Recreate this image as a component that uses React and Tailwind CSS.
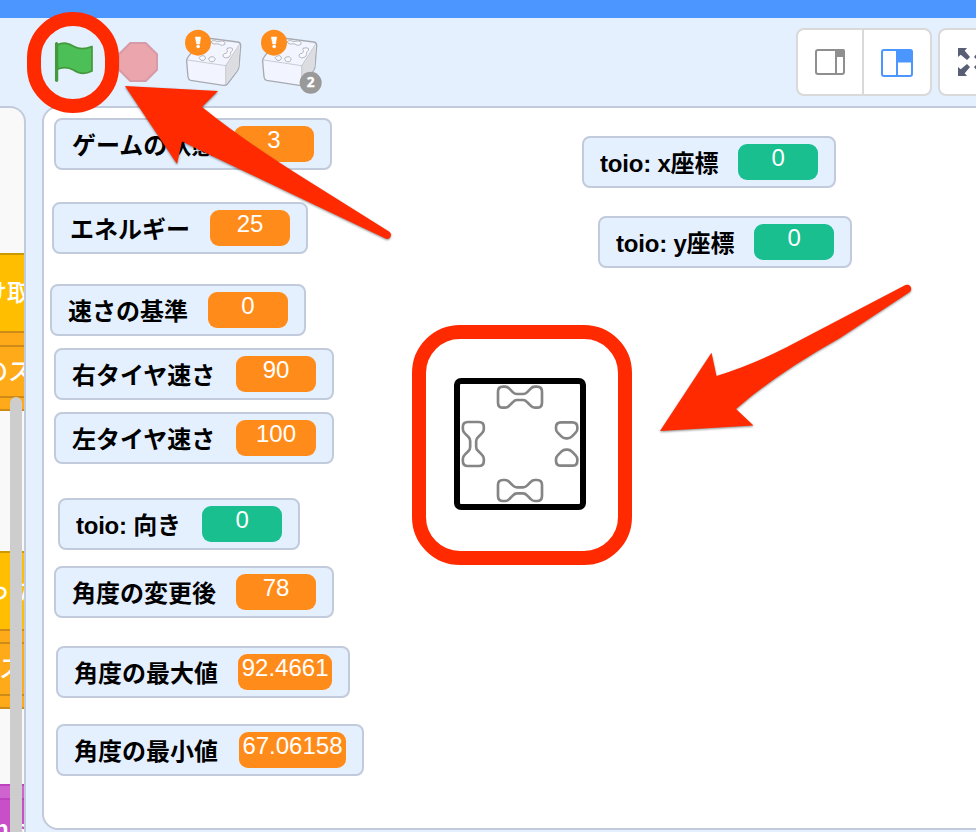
import React from 'react';

const monitors = [
    { label: 'ゲームの状態', value: '3', box: 'left-[10px] top-[10px] w-[278px]', color: 'bg-[#ff8c1a]' },
    { label: 'エネルギー', value: '25', box: 'left-[8px] top-[94px] w-[256px]', color: 'bg-[#ff8c1a]' },
    { label: '速さの基準', value: '0', box: 'left-[6px] top-[176px] w-[256px]', color: 'bg-[#ff8c1a]' },
    { label: '右タイヤ速さ', value: '90', box: 'left-[10px] top-[240px] w-[280px]', color: 'bg-[#ff8c1a]' },
    { label: '左タイヤ速さ', value: '100', box: 'left-[10px] top-[304px] w-[280px]', color: 'bg-[#ff8c1a]' },
    { label: 'toio: 向き', value: '0', box: 'left-[14px] top-[390px] w-[242px] tracking-[-0.25px]', color: 'bg-[#19bf8f]' },
    { label: '角度の変更後', value: '78', box: 'left-[10px] top-[458px] w-[280px]', color: 'bg-[#ff8c1a]' },
    { label: '角度の最大値', value: '92.4661', box: 'left-[12px] top-[538px] w-[294px]', color: 'bg-[#ff8c1a]' },
    { label: '角度の最小値', value: '67.06158', box: 'left-[12px] top-[616px] w-[308px]', color: 'bg-[#ff8c1a]' },
    { label: 'toio: x座標', value: '0', box: 'left-[538px] top-[28px] w-[254px] tracking-[-0.2px]', color: 'bg-[#19bf8f]' },
    { label: 'toio: y座標', value: '0', box: 'left-[554px] top-[108px] w-[254px] tracking-[-0.2px]', color: 'bg-[#19bf8f]' },
];

const Monitor = ({ label, value, box, color }) => (
    <div className={`absolute flex h-[52px] items-center justify-between rounded-lg border-2 border-[#c2cbdb] bg-[#e5f0ff] px-4 ${box}`}>
        <span className="pt-[3px] text-[24px] leading-8 font-bold whitespace-nowrap text-black">{label}</span>
        <span className={`h-9 min-w-20 rounded-[9px] px-[3.5px] text-center text-[24px] leading-[28px] text-white ${color}`}>{value}</span>
    </div>
);

const Flag = () => (
    <svg className="h-10 w-10 shrink-0" viewBox="0 0 40 40">
        <path d="M2.500 3.200C10-.5 15 1.500 20 4.500C26 8 31 7.500 38 4.500V29C31 32.500 25 32 19.500 28C14 25 9 24.500 2.500 27.500Z" fill="#4cbf56" stroke="#45993d" strokeWidth="1.700" strokeLinejoin="round" />
        <path d="M2.600 1.700V38.300" stroke="#45993d" strokeWidth="3.300" strokeLinecap="round" />
    </svg>
);

const Stop = () => (
    <svg className="h-10 w-10 shrink-0" viewBox="0 0 40 40">
        <path d="M12.300 1H27.700L39 12.300V27.700L27.700 39H12.300L1 27.700V12.300Z" fill="#eba5ad" stroke="#d69ba7" strokeWidth="2" strokeLinejoin="round" />
    </svg>
);

const Cube = ({ count }) => (
    <svg className="h-[72px] w-16 shrink-0" viewBox="36 78 192 216">
        <g strokeLinejoin="round" strokeLinecap="round">
            <path d="M50 184Q50 176 55 170L96 118Q101 113 110 114L203 126Q213 128 212 138L207 200Q206 208 201 214L172 252Q168 257 160 256L62 241Q55 239 54 231Z" fill="#f2f5ff" stroke="#a7abb1" strokeWidth="4" />
            <path d="M167 197L209 134L205 203L168 253Z" fill="#dcdde0" />
            <path d="M53 180L167 197L209 132M167 197V253" fill="none" stroke="#b3b7bd" strokeWidth="2" />
            <g fill="#f7f9ff" stroke="#b3b7bd" strokeWidth="3">
                <path d="M124 125Q126 120 134 122Q143 127 149 124Q158 120 165 127Q168 134 158 136Q151 136 147 132Q139 131 133 132Q123 131 124 125Z" />
                <path d="M172 145Q181 141 187 145Q190 151 183 155Q180 160 182 164Q179 174 167 174Q157 171 159 165Q161 160 168 160Q174 157 172 152Q168 148 172 145Z" />
                <path d="M93 168L102 167L107 174L102 181H93L88 174Z" />
                <path d="M121 171L130 170L136 177L131 185H121L116 178Z" />
            </g>
        </g>
        <circle cx="84" cy="128" r="39" fill="#ff8c1a" />
        <path d="M76 111H92L89 132H80Z" fill="#fff" stroke="#fff" strokeWidth="1.500" strokeLinejoin="round" />
        <circle cx="84.500" cy="139.500" r="5.500" fill="#fff" />
        {count && (
            <>
                <circle cx="194" cy="248" r="33" fill="#999" />
                <text x="194" y="262" textAnchor="middle" className="fill-white stroke-white stroke-1 font-['Noto_Sans'] text-[41px] font-bold">{count}</text>
            </>
        )}
    </svg>
);

const SmallStageIcon = () => (
    <svg className="h-7 w-8" viewBox="0 0 32 28">
        <rect x="2" y="2" width="28" height="24" rx="2" fill="none" stroke="#8f8f8f" strokeWidth="2" />
        <path d="M22 2H29Q30 2 30 3V8H22Z" fill="#8f8f8f" stroke="#8f8f8f" strokeWidth="2" />
        <path d="M22 8V26" stroke="#8f8f8f" strokeWidth="2" />
    </svg>
);

const LargeStageIcon = () => (
    <svg className="h-7 w-8" viewBox="0 0 32 28">
        <rect x="1" y="1" width="30" height="26" rx="2" fill="none" stroke="#4c97ff" strokeWidth="2" />
        <path d="M16 1H30Q31 1 31 2V13H16Z" fill="#4c97ff" stroke="#4c97ff" />
        <path d="M16 2V26" stroke="#4c97ff" strokeWidth="2" />
    </svg>
);

const FullScreenIcon = () => (
    <svg className="h-7 w-7 shrink-0" viewBox="0 0 28 28" fill="#575e75">
        <path d="M0 0H9L6.700 2.700L12 9L9 12L2.700 6.700L0 9Z" />
        <path d="M28 0H19L21.300 2.700L16 9L19 12L25.300 6.700L28 9Z" />
        <path d="M0 28H9L6.700 25.300L12 19L9 16L2.700 21.300L0 19Z" />
        <path d="M28 28H19L21.300 25.300L16 19L19 16L25.300 21.300L28 19Z" />
    </svg>
);

// Visible edge of the block workspace
const Workspace = () => (
    <div className="relative h-[740px] w-[26px] shrink-0 overflow-hidden rounded-tr-[16px] border-t-2 border-r-2 border-[#c2cbdb] bg-[#f9f9f9] text-[24px] font-medium whitespace-nowrap text-white">
        <div className="mt-[145px] flex h-[78px] items-center border-t-2 border-[#cc9900] bg-[#ffbf00]">
            <span className="-ml-[17px]">け取る</span>
        </div>
        <div className="h-[14px] border-t-2 border-[#cf8b17] bg-[#ffab19]" />
        <div className="flex h-[51px] items-center border-t-2 border-[#cf8b17] bg-[#ffab19]">
            <span className="-ml-[16px]">のス</span>
        </div>
        <div className="h-[15px] border-y-2 border-[#cf8b17] bg-[#ffab19]" />
        <div className="mt-[140px] flex h-[78px] items-center border-t-2 border-[#cc9900] bg-[#ffbf00]">
            <span className="-ml-[14px] tracking-[8px]">った</span>
        </div>
        <div className="h-[13px] border-t-2 border-[#cf8b17] bg-[#ffab19]" />
        <div className="flex h-[52px] items-center border-t-2 border-[#cf8b17] bg-[#ffab19]">
            <span className="-ml-[1px]">ス</span>
        </div>
        <div className="h-[15px] border-y-2 border-[#cf8b17] bg-[#ffab19]" />
        <div className="mt-[75px] h-[14px] border-t-2 border-[#bd42bd] bg-[#cf63cf]" />
        <div className="flex h-[60px] items-center border-t-2 border-[#bd42bd] bg-[#c94fc9]">
            <span className="-ml-[6px] font-bold">n s</span>
        </div>
        <div className="absolute top-[289px] left-[10px] h-[460px] w-3 rounded-full bg-[#cecdce]" />
    </div>
);

// Dumbbell shaped stud on top of the cube
const STUD = 'M311 230H315Q323 230 328 236L339 247Q344 252 351 252H369Q376 252 381 247L392 236Q397 230 405 230H411Q426 230 426 245V278Q426 293 411 293H405Q397 293 392 287L381 276Q376 270 369 270H351Q344 270 339 276L328 287Q323 293 315 293H309Q294 293 294 278V245Q294 230 309 230Z';

const ToioSprite = () => (
    <svg className="absolute top-[202px] left-[356px] h-[270px] w-60" viewBox="0 0 720 810">
        <rect x="171" y="213" width="378" height="378" rx="12" fill="#fff" stroke="#000" strokeWidth="18" />
        <g fill="none" stroke="#858585" strokeWidth="8" strokeLinejoin="round">
            <path d={STUD} />
            <path d={STUD} transform="translate(0 280)" />
            <path d={STUD} transform="translate(-41.500 762) rotate(-90)" />
            <path d="M483 337H517Q532 337 532 352V356Q532 363 527 368L516 379Q510 385 502 385H498Q490 385 484 379L473 368Q468 363 468 356V352Q468 337 483 337Z" />
            <path d="M483 467H517Q532 467 532 452V448Q532 441 527 436L516 425Q510 419 502 419H498Q490 419 484 425L473 436Q468 441 468 448V452Q468 467 483 467Z" />
        </g>
    </svg>
);

// Red marker shapes that lie over the editor
const Annotations = () => (
    <>
        <div className="absolute top-[12px] left-[27px] h-[101px] w-[92px] rounded-[46px] border-[14px] border-[#ff2a00]" />
        <div className="absolute top-[325px] left-[412px] h-[240px] w-[220px] rounded-[48px] border-[14px] border-[#ff2a00]" />
        <svg className="absolute top-0 left-0 h-[832px] w-[976px] drop-shadow-[0_1px_1px_rgba(0,0,0,0.45)]" viewBox="0 0 976 832" fill="#ff2a00">
            <path d="M125 86L218 91L202 107Q248 144 310 182L389 231.500A4 4 0 0 1 386 238.800L317 206Q235 167 182 141.500L177 164Z" />
            <path d="M660 431L711.500 352.700L716.500 376Q752 365 787 347L905 285.200A4 4 0 0 1 909 292.500L840 338Q776 374 736 409L753.500 425.500Z" />
        </svg>
    </>
);

const App = () => {
    return (
        <div className="relative h-[832px] w-[976px] overflow-hidden bg-[#e5f0ff] font-['Liberation_Sans','Noto_Sans_CJK_JP',sans-serif]">
            <div className="h-[18px] bg-[#4c97ff]" />

            {/* Stage header */}
            <div className="flex h-[88px] items-center pl-[54px]">
                <Flag />
                <div className="ml-6 flex"><Stop /></div>
                <div className="ml-6 flex gap-3">
                    <Cube />
                    <Cube count="2" />
                </div>
                <div className="ml-auto flex shrink-0 gap-[6px]">
                    <div className="flex h-[68px] w-[136px] rounded-lg border-2 border-[#d9d9d9] bg-white">
                        <div className="flex w-[66px] items-center justify-center border-r-2 border-[#d9d9d9]">
                            <SmallStageIcon />
                        </div>
                        <div className="flex flex-1 items-center justify-center pt-px">
                            <LargeStageIcon />
                        </div>
                    </div>
                    <div className="-mr-[30px] flex h-[68px] w-[68px] items-center justify-center rounded-lg border-2 border-[#d9d9d9] bg-white">
                        <FullScreenIcon />
                    </div>
                </div>
            </div>

            <div className="flex">
                <Workspace />
                {/* Stage */}
                <div className="relative ml-4 h-[724px] w-[960px] shrink-0 rounded-2xl border-2 border-[#c2cbdb] bg-white">
                    {monitors.map(monitor => (
                        <Monitor key={monitor.label} {...monitor} />
                    ))}
                    <ToioSprite />
                </div>
            </div>

            <Annotations />
        </div>
    );
};

export default App;
